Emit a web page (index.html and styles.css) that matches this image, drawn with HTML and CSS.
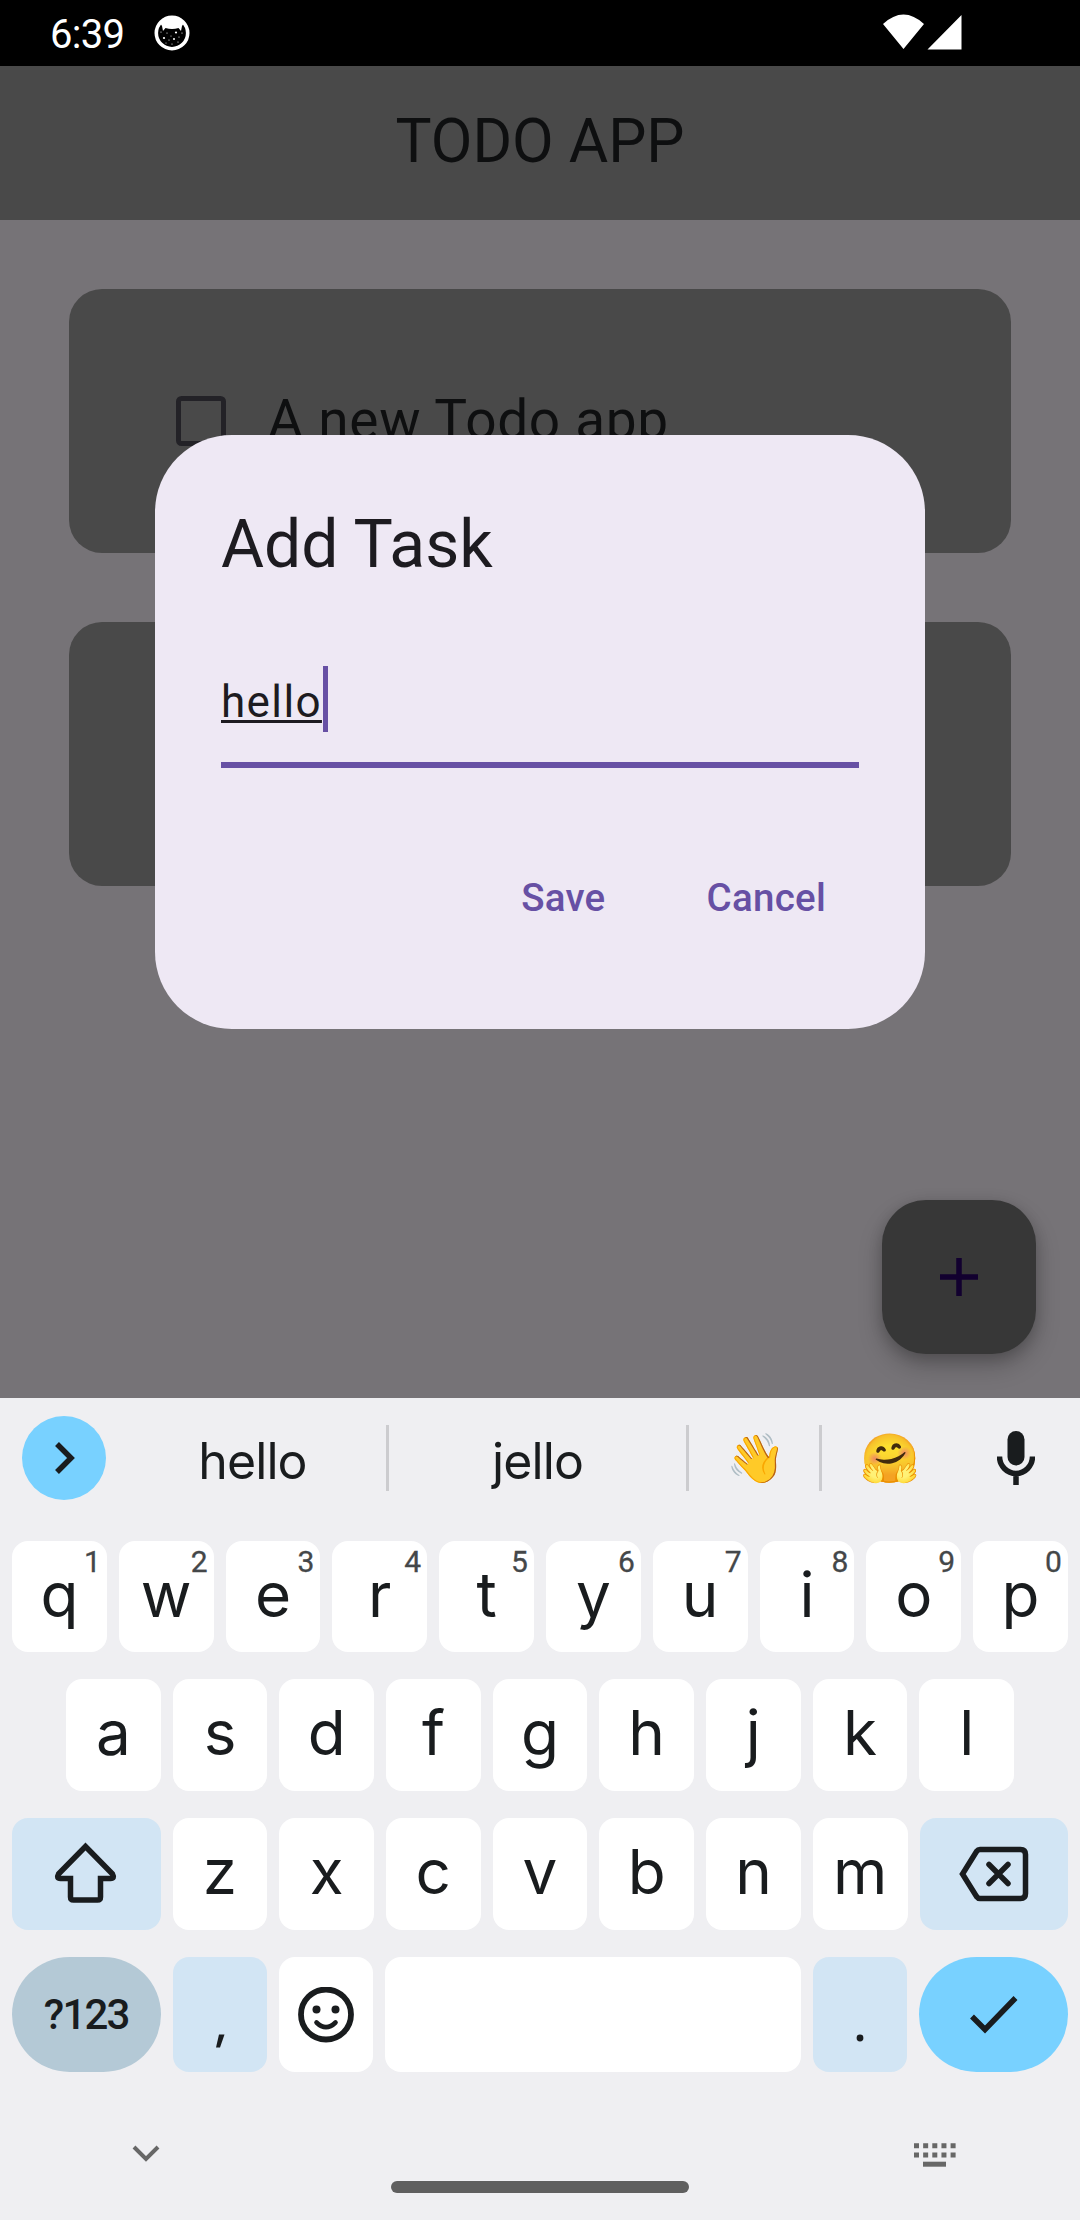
FILE: index.html
```html
<!DOCTYPE html>
<html lang="en">
<head>
<meta charset="utf-8">
<title>Todo App</title>
<link rel="stylesheet" href="styles.css">
</head>
<body>
<div class="screen">
  <header class="status">
    <span class="time">6:39</span>
    <svg class="cat" viewBox="0 0 36 36"><circle cx="18" cy="18" r="15.700" fill="#000" stroke="#fff" stroke-width="3.600"/><path d="M6 8Q18-2 30 8L28 11L27 16L24.500 13Q18 15 11.500 13L9 16L8 11Z" fill="#fff"/><g fill="#fff"><circle cx="10" cy="23" r="1.100"/><circle cx="22" cy="17.500" r="1.100"/><circle cx="20" cy="24" r="1"/><circle cx="13" cy="18" r=".6"/><circle cx="17" cy="21" r=".5"/><circle cx="15" cy="25" r=".6"/><circle cx="25" cy="22" r=".6"/><circle cx="28" cy="18" r=".6"/><circle cx="7" cy="17" r=".6"/><circle cx="18" cy="29" r=".6"/><circle cx="24" cy="27" r=".6"/><circle cx="12" cy="28" r=".5"/></g></svg>
    <svg class="signals" viewBox="0 0 80 36"><path d="M0 10Q20.500-9 41 10L20.500 35ZM44.500 35.500L78.500 1V35.500Z" fill="#fff"/></svg>
  </header>
  <main class="app">
    <h1 class="bar">TODO APP</h1>
    <div class="cards">
      <section class="card"><span class="box"></span><span class="task">A new Todo app</span></section>
      <section class="card"></section>
    </div>
    <div class="fab"><svg viewBox="0 0 40 40"><path d="M20 1V39M1 20H39" stroke="#12002f" stroke-width="5.500"/></svg></div>
    <div class="dialog">
      <h2>Add Task</h2>
      <div class="field"><span class="value">hello</span><span class="caret"></span></div>
      <div class="actions"><span>Save</span><span>Cancel</span></div>
    </div>
  </main>
  <section class="keyboard">
    <div class="suggest">
      <div class="more"><svg viewBox="0 0 84 84"><path d="M35 28L49 42L35 56" fill="none" stroke="#191c1e" stroke-width="5.500"/></svg></div>
      <span class="word first">hello</span><span class="word second">jello</span>
      <span class="emoji wave">👋</span><span class="emoji hug">🤗</span>
      <svg class="mic" viewBox="0 0 38 54"><rect x="10.500" y="0" width="17" height="34.500" rx="8.500" fill="#191c1e"/><path d="M2.500 25.500A16.500 17 0 0 0 35.500 25.500M19 42V54" fill="none" stroke="#191c1e" stroke-width="5.500"/></svg>
    </div>
    <div class="row top">
      <span class="key">q<sup>1</sup></span><span class="key">w<sup>2</sup></span><span class="key">e<sup>3</sup></span><span class="key">r<sup>4</sup></span><span class="key">t<sup>5</sup></span><span class="key">y<sup>6</sup></span><span class="key">u<sup>7</sup></span><span class="key">i<sup>8</sup></span><span class="key">o<sup>9</sup></span><span class="key">p<sup>0</sup></span>
    </div>
    <div class="row home">
      <span class="key">a</span><span class="key">s</span><span class="key">d</span><span class="key">f</span><span class="key">g</span><span class="key">h</span><span class="key">j</span><span class="key">k</span><span class="key">l</span>
    </div>
    <div class="row">
      <span class="key wide soft"><svg width="66" height="66" viewBox="0 0 66 66"><path d="M33 7L60 34.500Q62.500 39 58 39H48V57.500Q48 60.500 45 60.500H21Q18 60.500 18 57.500V39H8Q3.500 39 6 34.500Z" transform="translate(-.5 -1.500)" fill="none" stroke="#191c1e" stroke-width="5.500"/></svg></span>
      <span class="key">z</span><span class="key">x</span><span class="key">c</span><span class="key">v</span><span class="key">b</span><span class="key">n</span><span class="key">m</span>
      <span class="key wide soft"><svg width="70" height="56" viewBox="0 0 70 56"><path d="M21 3.500H61.500Q66.500 3.500 66.500 8.500V47.500Q66.500 52.500 61.500 52.500H21Q19 52.500 17.500 50.500L3.500 28L17.500 5.500Q19 3.500 21 3.500Z" fill="none" stroke="#191c1e" stroke-width="5.500"/><path d="M30 18.500L49 37.500M49 18.500L30 37.500" stroke="#191c1e" stroke-width="5.500" stroke-linecap="round"/></svg></span>
    </div>
    <div class="row bottom">
      <span class="key wide symbols">?123</span>
      <span class="key soft"><svg width="94" height="115" viewBox="0 0 94 115"><path d="M46 77.500H51.500L47 90.500H43Z" fill="#191c1e"/></svg></span>
      <span class="key"><svg width="56" height="56" viewBox="0 0 56 56"><circle cx="28" cy="27.500" r="25" fill="none" stroke="#191c1e" stroke-width="5.800"/><circle cx="18.500" cy="22.500" r="4" fill="#191c1e"/><circle cx="37.500" cy="22.500" r="4" fill="#191c1e"/><path d="M18.500 35.500Q28 45 37.500 35.500" fill="none" stroke="#191c1e" stroke-width="4.600" stroke-linecap="round"/></svg></span>
      <span class="key space"></span>
      <span class="key soft"><svg width="94" height="115" viewBox="0 0 94 115"><circle cx="47" cy="81" r="3.400" fill="#191c1e"/></svg></span>
      <span class="key wide enter"><svg width="50" height="40" viewBox="0 0 50 40"><path d="M3 21.500L16 34.500L46.500 3" fill="none" stroke="#191c1e" stroke-width="5.500"/></svg></span>
    </div>
    <footer class="nav">
      <svg class="down" viewBox="0 0 28 18"><path d="M2 2L14 14L26 2" fill="none" stroke="#676767" stroke-width="4"/></svg>
      <span class="pill"></span>
      <svg class="ime" viewBox="0 0 42 24"><path d="M0 2.700H42M0 12H42" stroke="#676767" stroke-width="5" stroke-dasharray="5 4.150"/><path d="M9 21.200H32" stroke="#676767" stroke-width="5"/></svg>
    </footer>
  </section>
</div>
</body>
</html>
```
FILE: styles.css
```css
* { box-sizing: border-box; }
body { margin: 0; font-family: Roboto, sans-serif; }
svg { display: block; flex: none; }
.screen { width: 1080px; height: 2220px; overflow: hidden; background: #000; }

.status { height: 66px; display: flex; align-items: flex-start; padding: 0 117px 0 50px; }
.time { width: 104px; font-size: 40px; line-height: 70px; color: #fff; letter-spacing: -.7px; }
.cat { width: 36px; height: 36px; margin-top: 15px; }
.signals { width: 80px; height: 36px; margin: 14px 0 0 auto; }

.app { position: relative; height: 1332px; background: #767377; }
.bar { margin: 0; height: 154px; padding-bottom: 3px; background: #494949; color: #0e0f10; font-size: 60.5px; font-weight: 400; line-height: 151px; text-align: center; }
.cards { padding: 69px; display: flex; flex-direction: column; gap: 69px; }
.card { height: 264px; border-radius: 33px; background: #494949; display: flex; align-items: center; padding-left: 107px; gap: 41.5px; }
.box { width: 50px; height: 50px; border: 5.5px solid #232227; border-radius: 5.5px; }
.task { font-size: 55px; letter-spacing: .65px; color: #0e0f10; padding-bottom: 2px; }
.fab { position: absolute; left: 882px; top: 1134px; width: 154px; height: 154px; border-radius: 44px; background: #373737; display: flex; align-items: center; justify-content: center; box-shadow: 0 12px 24px rgba(0,0,0,.22), 0 4px 14px rgba(0,0,0,.16); }
.fab svg { width: 40px; height: 40px; }

.dialog { position: absolute; left: 155px; top: 369px; width: 770px; height: 594px; padding: 65px 66px; border-radius: 77px; background: #eee8f4; color: #1d1b20; }
.dialog h2 { margin: 0; font-size: 66px; font-weight: 400; line-height: 89px; height: 88px; }
.field { height: 180px; padding-top: 78px; border-bottom: 6px solid #6750a4; display: flex; align-items: flex-start; }
.value { font-size: 44px; line-height: 73px; letter-spacing: 1.375px; text-decoration: underline; text-decoration-thickness: 3px; text-underline-offset: 3px; text-decoration-skip-ink: none; }
.caret { width: 5.5px; height: 66px; margin-left: 1px; background: #6750a4; }
.actions { height: 132px; margin-top: 64px; padding-right: 33px; display: flex; justify-content: flex-end; gap: 101px; color: #6750a4; font-size: 38.5px; font-weight: 500; line-height: 132px; letter-spacing: .275px; }

.keyboard { height: 822px; background: #efeff2; padding: 0 12px; color: #191c1e; font-family: Inter, sans-serif; }
.suggest { height: 143px; padding: 0 33px 0 10px; display: flex; align-items: flex-start; }
.more { width: 84px; height: 84px; margin: 18px 21px 0 0; border-radius: 50%; background: #78d1ff; }
.word, .emoji { height: 66px; margin-top: 27px; border-right: 3px solid #cccccf; text-align: center; }
.word { font-size: 50px; line-height: 72px; letter-spacing: -.9px; }
.first { width: 262px; padding-right: 8px; }
.second { width: 300px; }
.emoji { font-family: "Noto Color Emoji", sans-serif; font-size: 48px; line-height: 67px; }
.wave { width: 133px; padding-left: 5px; }
.hug { width: 134px; padding-left: 5px; border-color: transparent; }
.mic { width: 38px; height: 54px; margin: 33px 0 0 auto; }

.row { display: flex; gap: 12px; height: 112px; margin-bottom: 27px; }
.row.top { height: 111px; }
.row.home { padding: 0 54px; }
.row.bottom { height: 115px; margin-bottom: 0; }
.key { position: relative; flex: 1 1 0; min-width: 0; border-radius: 16px; background: #fff; display: flex; align-items: center; justify-content: center; font-size: 62px; line-height: 108px; padding-bottom: 4px; }
.key:has(svg) { padding: 0; }
.key sup { position: absolute; top: 5px; right: 6px; font-family: Roboto, sans-serif; font-size: 30px; line-height: 32px; color: #444749; -webkit-text-stroke: .3px #444749; }
.row .wide { flex: 0 0 148.5px; }
.soft { background: #d2e5f4; }
.row .space { flex: 0 0 416px; }
.symbols { border-radius: 58px; background: #b4c9d6; font-family: Roboto, sans-serif; font-size: 42px; font-weight: 500; letter-spacing: -1.8px; padding-bottom: 0; }
.enter { border-radius: 58px; background: #78d1ff; }
.nav { height: 148px; display: flex; align-items: flex-start; justify-content: space-between; padding: 0 112px 0 120px; }
.down { width: 28px; height: 18px; margin-top: 73px; }
.pill { width: 298px; height: 12px; margin: 109px 0 0 5px; border-radius: 6px; background: #5f5f5f; }
.ime { width: 42px; height: 24px; margin-top: 71px; }
```
